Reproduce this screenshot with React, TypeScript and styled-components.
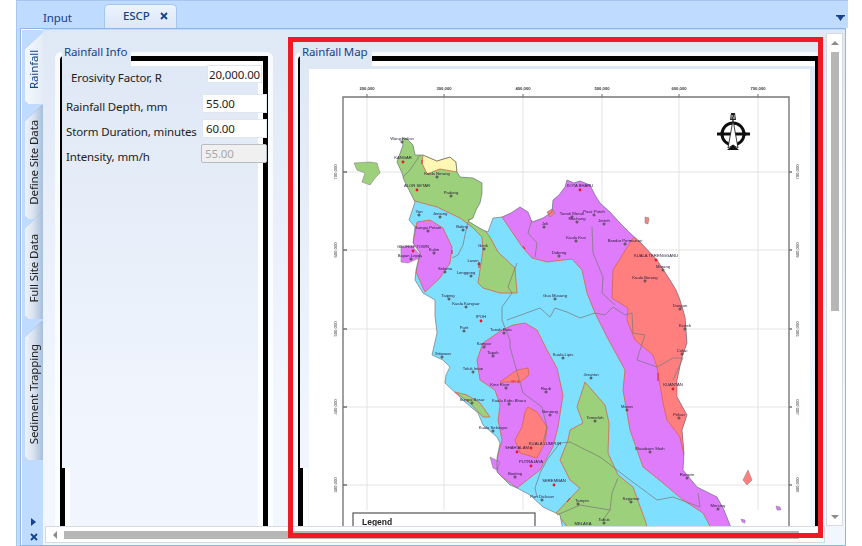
import styled, { createGlobalStyle } from 'styled-components';

const navy = '#15428b';
const paneTop = '#dfe8f5';

const GlobalStyle = createGlobalStyle`
    html, body {
        margin: 0;
        background: #ffffff;
    }
    * {
        box-sizing: border-box;
    }
`;

const Page = styled.div`
    width: 832px;
    height: 546px;
    margin-left: 16px;
    display: flex;
    flex-direction: column;
    font-family: 'Noto Sans', 'Open Sans', sans-serif;
    font-size: 11.5px;
    letter-spacing: -0.13px;
    overflow: hidden;
`;

const TabStrip = styled.div`
    height: 28px;
    flex: none;
    display: flex;
    align-items: flex-end;
    padding-left: 26px;
    background: #bfdbff;
    border-top: 1px solid #a6c6f0;
    border-left: 1px solid #a9c8f0;
`;

const PlainTab = styled.div`
    width: 28px;
    height: 18px;
    line-height: 18px;
    margin-bottom: 1px;
    color: ${navy};
`;

const ActiveTab = styled.div`
    width: 73px;
    height: 24px;
    margin-left: 33px;
    padding: 0 8px 2px 18px;
    display: flex;
    align-items: center;
    justify-content: space-between;
    color: ${navy};
    font-weight: 500;
    background: linear-gradient(#ecf3fd, #dbe7f8);
    border: 1px solid #a6c6f0;
    border-bottom: none;
    border-radius: 5px 5px 0 0;
`;

const StripMenu = styled.svg`
    margin: 0 3px 7px auto;
    display: block;
`;

const Body = styled.div`
    width: 830px;
    flex: 1;
    min-height: 0;
    padding-left: 3px;
    background: #bfdbff;
    border-left: 1px solid #a9c8f0;
`;

const Frame = styled.div`
    height: 100%;
    display: flex;
    background: #bfdbff;
    border: 1px solid #8fb4e6;
`;

const Rail = styled.div`
    width: 22px;
    flex: none;
    display: flex;
    flex-direction: column;
    padding: 4px 0 4px 4px;
    box-shadow: inset 1px 1px 0 #ffffff;
`;

const RailTab = styled.div<{ $height: number; $gap: number }>`
    height: ${({ $height }) => $height}px;
    margin-top: ${({ $gap }) => $gap}px;
    flex: none;
    filter: drop-shadow(0 0 0.6px #7f9abc);
`;

const RailFace = styled.div<{ $active?: boolean; $shift: number }>`
    height: 100%;
    display: flex;
    align-items: center;
    justify-content: center;
    padding-top: ${({ $shift }) => $shift}px;
    clip-path: polygon(0 16px, 17px 0, 100% 0, 100% 100%, 3px 100%, 0 calc(100% - 3px));
    color: ${({ $active }) => ($active ? navy : '#222222')};
    background: ${({ $active }) =>
        $active
            ? 'linear-gradient(90deg, #f4f8fd, #e3ecf8)'
            : 'linear-gradient(90deg, #f0f3f8, #d9e3ef 45%, #a7bfdc)'};
`;

const RailLabel = styled.span`
    writing-mode: vertical-rl;
    transform: rotate(180deg);
    white-space: nowrap;
    line-height: 16px;
`;

const RailFooter = styled.div`
    margin-top: auto;
    display: flex;
    flex-direction: column;
    align-items: center;
    gap: 7px;
`;

const Content = styled.div`
    position: relative;
    flex: 1;
    min-width: 0;
    margin-top: 1px;
    padding: 3px 2px 2px;
    display: grid;
    grid-template-columns: 781px 17px;
    grid-template-rows: 493px 17px;
    background: linear-gradient(${paneTop}, #f2f7ff 75%);
`;

const Viewport = styled.div`
    display: flex;
    gap: 22px;
    padding: 19px 0 0 10px;
    overflow: hidden;
`;

const Group = styled.section<{ $width: number; $side: number }>`
    position: relative;
    flex: none;
    width: ${({ $width }) => $width}px;
    display: flex;
    padding: 4px ${({ $side }) => $side}px 0;
    background: rgba(255, 255, 255, 0.75);
    border-radius: 6px 6px 0 0;
`;

const GroupLegend = styled.h3<{ $left: number; $width: number }>`
    position: absolute;
    top: -8px;
    left: ${({ $left }) => $left}px;
    width: ${({ $width }) => $width}px;
    height: 22px;
    margin: 0;
    padding-left: 2px;
    z-index: 1;
    font-size: inherit;
    font-weight: 400;
    line-height: 16px;
    white-space: nowrap;
    color: ${navy};
    background: ${paneTop};
`;

const GroupFrame = styled.div`
    position: relative;
    flex: 1;
    min-width: 0;
    display: flex;
    border-top: 5px solid #000000;
    border-right: 5px solid #000000;
    border-left: 2px solid #000000;
    border-top-left-radius: 4px;
`;

const ThickEdge = styled.div`
    position: absolute;
    left: -2px;
    bottom: 0;
    width: 10px;
    height: 58px;
    background: #000000;
    border-right: 5px solid #ffffff;
`;

const GroupBody = styled.div<{ $band?: boolean; $padding?: string }>`
    flex: 1;
    min-width: 0;
    padding: ${({ $padding }) => $padding ?? '0'};
    background: linear-gradient(${paneTop}, #f1f6fe 80%);
    border-top: 5px solid #ffffff;
    border-right: ${({ $band }) => ($band ? '5px solid #ffffff' : 'none')};
`;

const Field = styled.div<{ $indent: number; $over: number; $gap: number; $height: number }>`
    height: ${({ $height }) => $height}px;
    display: flex;
    justify-content: space-between;
    margin: ${({ $gap }) => $gap}px -${({ $over }) => $over}px 0 0;
    padding-left: ${({ $indent }) => $indent}px;
`;

const FieldLabel = styled.label`
    padding-top: 5px;
    line-height: 16px;
    color: #222222;
    white-space: nowrap;
`;

const FieldInput = styled.input<{ $width: number; $right?: boolean }>`
    width: ${({ $width }) => $width}px;
    height: 100%;
    padding: 0 ${({ $right }) => ($right ? '1px' : '3px')};
    font: inherit;
    letter-spacing: inherit;
    color: #1e1e1e;
    text-align: ${({ $right }) => ($right ? 'right' : 'left')};
    background: #ffffff;
    border: 1px solid #dfe6f0;
    outline: none;

    &:disabled {
        color: #a9a9a9;
        background: #f0f0f0;
        border: 1px solid #b9bdc2;
        border-radius: 2px;
    }
`;

const MapSvg = styled.svg`
    display: block;
    background: #ffffff;
    font-family: 'Liberation Sans', sans-serif;
    letter-spacing: 0;
`;

const VScroll = styled.div`
    display: flex;
    flex-direction: column;
    align-items: center;
    padding: 7px 0 6px;
    background: #ffffff;
    border: 1px solid #d6dae0;
`;

const HScroll = styled.div`
    margin-right: 1px;
    display: flex;
    align-items: center;
    padding-left: 7px;
    background: #ffffff;
    border: 1px solid #d6dae0;
`;

const ArrowUp = styled.i`
    width: 0;
    height: 0;
    border: 4px solid transparent;
    border-top: none;
    border-bottom: 4px solid #8a8a8a;
`;

const ArrowDown = styled.i`
    width: 0;
    height: 0;
    margin-top: auto;
    border: 4px solid transparent;
    border-bottom: none;
    border-top: 4px solid #8a8a8a;
`;

const ArrowLeft = styled.i`
    width: 0;
    height: 0;
    border: 4px solid transparent;
    border-left: none;
    border-right: 4px solid #8a8a8a;
`;

const VThumb = styled.div`
    width: 8px;
    height: 259px;
    margin-top: 7px;
    background: #b6b6b6;
`;

const HThumb = styled.div`
    width: 735px;
    height: 8px;
    margin-left: 7px;
    background: #b6b6b6;
`;

const Highlight = styled.div`
    position: absolute;
    left: 245px;
    top: 7px;
    width: 535px;
    height: 501px;
    border: 5px solid #ed1c24;
    pointer-events: none;
`;

type Town = { name: string; x: number; y: number; mx: number; my: number; star?: boolean };

const towns: Town[] = [
    { name: 'Wang Kelian', x: 402, y: 140, mx: 402, my: 142 },
    { name: 'KANGAR', x: 403, y: 159, mx: 403, my: 162, star: true },
    { name: 'Kuala Nerang', x: 437, y: 175, mx: 437, my: 177 },
    { name: 'ALOR SETAR', x: 417, y: 187, mx: 417, my: 190, star: true },
    { name: 'Padang', x: 451, y: 194, mx: 451, my: 196 },
    { name: 'Yan', x: 419, y: 213, mx: 419, my: 215 },
    { name: 'Jeniang', x: 440, y: 215, mx: 440, my: 217 },
    { name: 'Baling', x: 462, y: 228, mx: 463, my: 230 },
    { name: 'Sungai Petani', x: 428, y: 229, mx: 428, my: 231 },
    { name: 'GEORGE TOWN', x: 413, y: 248, mx: 413, my: 251, star: true },
    { name: 'Bayan Lepas', x: 410, y: 257, mx: 411, my: 259 },
    { name: 'Kulim', x: 434, y: 251, mx: 434, my: 253 },
    { name: 'Selama', x: 445, y: 270, mx: 445, my: 272 },
    { name: 'Lenggong', x: 466, y: 274, mx: 471, my: 276 },
    { name: 'Lawin', x: 473, y: 262, mx: 479, my: 264 },
    { name: 'Gerik', x: 483, y: 247, mx: 484, my: 249 },
    { name: 'Jeli', x: 545, y: 225, mx: 544, my: 227 },
    { name: 'Dabong', x: 559, y: 254, mx: 559, my: 256 },
    { name: 'KOTA BHARU', x: 580, y: 187, mx: 580, my: 190, star: true },
    { name: 'Tanah Merah', x: 572, y: 215, mx: 572, my: 217 },
    { name: 'Pasir Puteh', x: 594, y: 213, mx: 594, my: 215 },
    { name: 'Machang', x: 577, y: 220, mx: 577, my: 222 },
    { name: 'Jerteh', x: 604, y: 222, mx: 604, my: 224 },
    { name: 'Kuala Krai', x: 576, y: 239, mx: 576, my: 241 },
    { name: 'Bandar Permaisuri', x: 625, y: 242, mx: 625, my: 244 },
    { name: 'KUALA TERENGGANU', x: 656, y: 257, mx: 656, my: 260, star: true },
    { name: 'Marang', x: 663, y: 268, mx: 663, my: 270 },
    { name: 'Kuala Berang', x: 645, y: 279, mx: 645, my: 281 },
    { name: 'Gua Musang', x: 555, y: 297, mx: 555, my: 299 },
    { name: 'Dungun', x: 680, y: 307, mx: 680, my: 309 },
    { name: 'Kerteh', x: 685, y: 327, mx: 685, my: 329 },
    { name: 'Cukai', x: 682, y: 352, mx: 682, my: 354 },
    { name: 'Taiping', x: 448, y: 297, mx: 449, my: 299 },
    { name: 'Kuala Kangsar', x: 466, y: 305, mx: 466, my: 307 },
    { name: 'IPOH', x: 481, y: 318, mx: 481, my: 321, star: true },
    { name: 'Parit', x: 464, y: 329, mx: 464, my: 331 },
    { name: 'Tanah Rata', x: 501, y: 331, mx: 504, my: 333 },
    { name: 'Kampar', x: 484, y: 345, mx: 484, my: 347 },
    { name: 'Tapah', x: 493, y: 354, mx: 493, my: 356 },
    { name: 'Kuala Lipis', x: 563, y: 356, mx: 563, my: 358 },
    { name: 'Sitiawan', x: 443, y: 355, mx: 442, my: 357 },
    { name: 'Teluk Intan', x: 473, y: 370, mx: 473, my: 372 },
    { name: 'Kine River', x: 500, y: 386, mx: 506, my: 388 },
    { name: 'Sungai Besar', x: 472, y: 401, mx: 472, my: 403 },
    { name: 'Kuala Kubu Bharu', x: 509, y: 402, mx: 509, my: 404 },
    { name: 'Raub', x: 546, y: 390, mx: 546, my: 392 },
    { name: 'Bentong', x: 550, y: 413, mx: 550, my: 415 },
    { name: 'Kuala Selangor', x: 493, y: 429, mx: 493, my: 431 },
    { name: 'KUALA LUMPUR', x: 545, y: 445, mx: 531, my: 448, star: true },
    { name: 'SHAH ALAM', x: 517, y: 449, mx: 517, my: 452, star: true },
    { name: 'PUTRAJAYA', x: 531, y: 463, mx: 531, my: 466, star: true },
    { name: 'Banting', x: 515, y: 475, mx: 515, my: 477 },
    { name: 'SEREMBAN', x: 554, y: 482, mx: 554, my: 485, star: true },
    { name: 'Port Dickson', x: 542, y: 498, mx: 542, my: 500 },
    { name: 'Jerantut', x: 591, y: 376, mx: 591, my: 378 },
    { name: 'Maran', x: 627, y: 408, mx: 627, my: 410 },
    { name: 'Temerloh', x: 595, y: 419, mx: 595, my: 421 },
    { name: 'Muadzam Shah', x: 650, y: 450, mx: 650, my: 452 },
    { name: 'KUANTAN', x: 673, y: 386, mx: 673, my: 389, star: true },
    { name: 'Pekan', x: 679, y: 416, mx: 679, my: 418 },
    { name: 'Rompin', x: 687, y: 476, mx: 687, my: 478 },
    { name: 'Mersing', x: 718, y: 507, mx: 718, my: 509 },
    { name: 'Tampin', x: 582, y: 502, mx: 578, my: 504 },
    { name: 'Segamat', x: 631, y: 500, mx: 631, my: 502 },
    { name: 'Tabuk', x: 604, y: 521, mx: 604, my: 523 },
    { name: 'MELAKA', x: 583, y: 525, mx: 570, my: 530 },
];

const coast =
    '402,138 407,139 413,145 415,155 423,155 430,158 437,161 443,159 450,157 456,162 457,172 460,177 473,178 482,183 482,193 480,203 476,210 473,218 468,221 476,226 483,230 488,232 493,218 502,217 511,213 520,207 528,212 532,222 543,218 552,212 553,200 559,195 565,187 567,180 574,183 580,181 590,185 595,195 600,203 610,212 620,223 630,233 640,242 657,260 670,280 676,290 680,300 685,317 687,343 682,357 677,380 677,397 687,415 682,430 684,453 683,470 697,487 717,497 724,510 730,525 735,540 565,540 560,515 543,507 530,495 517,488 510,485 497,472 497,458 500,443 497,437 483,425 478,413 465,402 445,383 446,375 450,367 443,360 432,355 437,333 435,316 435,300 423,293 415,280 416,270 420,253 413,243 415,227 409,220 415,202 404,180 402,173 397,162 403,145';

const regions = [
    {
        fill: '#9dd07a',
        points:
            '390,130 500,130 500,210 468,220 482,227 490,237 498,252 515,268 517,293 500,293 483,288 478,283 480,270 483,250 482,237 472,227 460,218 437,207 415,201 390,195',
    },
    {
        fill: '#fff8b4',
        points: '423,155 437,161 450,157 456,162 457,172 440,169 427,174 422,163',
    },
    {
        fill: '#df7bfb',
        points:
            '502,217 523,248 532,258 547,262 572,259 582,270 587,293 595,313 607,337 625,370 623,390 630,430 643,467 663,483 683,500 703,513 712,530 760,530 760,170 520,170',
    },
    {
        fill: '#ff7f7f',
        points:
            '633,238 613,270 612,298 628,308 627,320 635,340 653,355 657,367 663,403 667,420 680,437 684,455 700,455 700,230',
    },
    {
        fill: '#9dd07a',
        points:
            '585,382 605,405 609,423 608,453 618,475 633,487 645,520 648,530 570,530 556,513 580,488 570,480 560,460 568,440 570,430 583,423 577,407',
    },
    {
        fill: '#df7bfb',
        points:
            '513,325 525,323 537,330 547,350 557,368 563,395 558,427 553,447 540,470 517,488 497,473 497,458 502,440 498,420 500,405 495,390 480,380 477,360 483,343 502,330',
    },
    {
        fill: '#df7bfb',
        points: '417,222 430,220 443,228 452,247 450,263 440,278 425,292 416,272 420,253 413,243',
    },
    {
        fill: '#ff7f7f',
        points: '528,407 537,412 547,427 545,443 537,458 520,453 515,440 522,427 525,412',
    },
    {
        fill: '#ff7f7f',
        points: '500,382 517,370 528,368 529,375 520,382',
    },
    {
        fill: '#9dd07a',
        points: '455,392 467,395 480,403 490,417 483,417 470,403',
    },
];

const islands = [
    { fill: '#9dd07a', points: '354,163 370,162 377,163 380,173 376,177 370,185 362,182 365,173 357,170' },
    { fill: '#df7bfb', points: '401,247 412,246 422,257 408,263 401,262' },
    { fill: '#df7bfb', points: '490,457 500,462 497,470 493,468' },
    { fill: '#ff7f7f', points: '748,470 752,480 747,485 743,480' },
    { fill: '#ff7f7f', points: '645,217 649,218 648,224 645,223' },
    { fill: '#ff7f7f', points: '547,212 552,209 555,213 550,217' },
    { fill: '#df7bfb', points: '776,506 780,507 781,510 777,510' },
    { fill: '#df7bfb', points: '741,519 745,520 745,523 742,522' },
];

const borders = [
    '420,155 410,170 403,177',
    '468,222 465,235 463,245 458,255 452,258',
    '517,263 508,287 512,293 502,307 502,320 505,328 510,340 510,347 523,393 542,407 547,427 543,443',
    '507,320 540,308 550,317 555,308 567,312 580,318 595,313 605,315 613,307 625,315 632,313 633,333 645,335 640,350 637,360 657,367 673,358 683,358 673,380',
    '592,227 593,253 603,277 602,293 615,305',
    '532,220 528,233 537,243 535,257',
    '547,460 560,443 570,442 600,457 617,470 630,480 657,500 673,497 700,507 698,493',
    '618,478 612,493 610,510 603,520',
    '557,515 580,505 610,510',
    '547,460 540,473 535,488 537,497',
];

const gridX = [
    { x: 367, label: '200,000' },
    { x: 444, label: '300,000' },
    { x: 523, label: '400,000' },
    { x: 602, label: '500,000' },
    { x: 679, label: '600,000' },
    { x: 758, label: '700,000' },
];

const gridY = [
    { y: 172, label: '700,000' },
    { y: 250, label: '600,000' },
    { y: 329, label: '500,000' },
    { y: 407, label: '400,000' },
    { y: 485, label: '300,000' },
];

function RainfallMap() {
    return (
        <MapSvg width={501} height={457} viewBox="309 69 501 457">
            <defs>
                <clipPath id="land">
                    <polygon points={coast} />
                </clipPath>
                <filter id="soft" x="0" y="0" width="100%" height="100%">
                    <feGaussianBlur stdDeviation="0.4" />
                </filter>
            </defs>
            <g filter="url(#soft)">
                {gridX.map(({ x }) => (
                    <line key={x} x1={x} y1={97} x2={x} y2={510} stroke="#dcdcdc" strokeWidth={0.8} />
                ))}
                {gridY.map(({ y }) => (
                    <line key={y} x1={343} y1={y} x2={789} y2={y} stroke="#dcdcdc" strokeWidth={0.8} />
                ))}

                <polygon points={coast} fill="#7fdfff" />
                <g clipPath="url(#land)">
                    {regions.map(({ fill, points }) => (
                        <polygon key={points} points={points} fill={fill} stroke="#d4664a" strokeWidth={0.8} />
                    ))}
                </g>
                {islands.map(({ fill, points }) => (
                    <polygon key={points} points={points} fill={fill} stroke="#777777" strokeWidth={0.5} />
                ))}
                <polygon points={coast} fill="none" stroke="#666666" strokeWidth={0.6} />
                {borders.map((points) => (
                    <polyline key={points} points={points} fill="none" stroke="#777777" strokeWidth={0.7} />
                ))}

                {gridX.map(({ x }) => (
                    <line key={x} x1={x} y1={94} x2={x} y2={97} stroke="#444444" strokeWidth={0.8} />
                ))}
                {gridY.map(({ y }) => (
                    <g key={y}>
                        <line x1={343} y1={y} x2={347} y2={y} stroke="#333333" strokeWidth={1} />
                        <line x1={789} y1={y} x2={792} y2={y} stroke="#333333" strokeWidth={1} />
                    </g>
                ))}
                <polyline points="343,526 343,97 789,97 789,526" fill="none" stroke="#777777" strokeWidth={1.4} />

                {gridX.map(({ x, label }) => (
                    <text key={x} x={x} y={90} fontSize={4.2} fontWeight={700} textAnchor="middle" fill="#333333">
                        {label}
                    </text>
                ))}
                {gridY.map(({ y, label }) => (
                    <g key={y}>
                        <text transform={`translate(337 ${y}) rotate(-90)`} fontSize={4.2} textAnchor="middle" fill="#333333">
                            {label}
                        </text>
                        <text transform={`translate(799 ${y}) rotate(-90)`} fontSize={4.2} textAnchor="middle" fill="#333333">
                            {label}
                        </text>
                    </g>
                ))}

                {towns.map(({ name, x, y, mx, my, star }) => (
                    <g key={name}>
                        <text x={x} y={y} fontSize={4.2} textAnchor="middle" fill="#2a1a3a">
                            {name}
                        </text>
                        {star ? (
                            <circle cx={mx} cy={my} r={1.4} fill="#e8182a" />
                        ) : (
                            <circle cx={mx} cy={my} r={1} fill="#ffffff" stroke="#111111" strokeWidth={0.8} />
                        )}
                    </g>
                ))}
                <text x={515} y={383} fontSize={4.2} textAnchor="middle" fill="#e8182a">
                    TF 5
                </text>
                <path
                    d="M422 160v4M452 250v4M479 262v6M523 246l2 3M658 373v8M570 498l-3 4"
                    stroke="#e8182a"
                    strokeWidth={1}
                    fill="none"
                />

                <circle cx={733} cy={134} r={11} fill="#ffffff" stroke="#111111" strokeWidth={3} />
                <path d="M717 134h33" stroke="#111111" strokeWidth={3} />
                <path d="M717 134l6-2v4zM750 134l-6-2v4z" fill="#111111" />
                <path d="M733 120l-5 28 5-3 5 3z" fill="#ffffff" stroke="#111111" strokeWidth={0.8} />
                <path d="M727 150l6-5 6 5-6 0z" fill="#111111" />
                <path d="M731 113h4l1 7h-6z" fill="#222222" />
                <text x={733} y={119} fontSize={5} textAnchor="middle" fill="#ffffff">
                    N
                </text>

                <rect x={353} y={513} width={182} height={20} fill="#ffffff" stroke="#555555" strokeWidth={1.2} />
                <text x={362} y={525} fontSize={8.5} fontWeight={700} fill="#222222">
                    Legend
                </text>
            </g>
        </MapSvg>
    );
}

export default function App() {
    return (
        <Page>
            <GlobalStyle />
            <TabStrip>
                <PlainTab>Input</PlainTab>
                <ActiveTab>
                    ESCP
                    <svg width="8" height="8" viewBox="0 0 8 8">
                        <path d="M1 1l6 6M7 1l-6 6" stroke={navy} strokeWidth="1.8" />
                    </svg>
                </ActiveTab>
                <StripMenu width="9" height="6" viewBox="0 0 9 6">
                    <path d="M0 0h9v1.4H7.6L4.5 6 1.4 1.4H0z" fill={navy} />
                </StripMenu>
            </TabStrip>
            <Body>
                <Frame>
                    <Rail>
                        <RailTab $height={71} $gap={0}>
                            <RailFace $active $shift={2}>
                                <RailLabel>Rainfall</RailLabel>
                            </RailFace>
                        </RailTab>
                        <RailTab $height={114} $gap={1}>
                            <RailFace $shift={0}>
                                <RailLabel>Define Site Data</RailLabel>
                            </RailFace>
                        </RailTab>
                        <RailTab $height={107} $gap={-7}>
                            <RailFace $shift={6}>
                                <RailLabel>Full Site Data</RailLabel>
                            </RailFace>
                        </RailTab>
                        <RailTab $height={139} $gap={2}>
                            <RailFace $shift={7}>
                                <RailLabel>Sediment Trapping</RailLabel>
                            </RailFace>
                        </RailTab>
                        <RailFooter>
                            <svg width="6" height="8" viewBox="0 0 6 8">
                                <path d="M0 0l5 4-5 4z" fill={navy} />
                            </svg>
                            <svg width="8" height="8" viewBox="0 0 8 8">
                                <path d="M1 1l6 6M7 1l-6 6" stroke={navy} strokeWidth="1.8" />
                            </svg>
                        </RailFooter>
                    </Rail>
                    <Content>
                        <Viewport>
                            <Group $width={218} $side={5}>
                                <GroupLegend $left={7} $width={69}>
                                    Rainfall Info
                                </GroupLegend>
                                <GroupFrame>
                                    <ThickEdge />
                                    <GroupBody $band>
                                        <Field $indent={9} $over={4} $gap={-1} $height={18}>
                                            <FieldLabel>Erosivity Factor, R</FieldLabel>
                                            <FieldInput $width={55} $right readOnly value="20,000.00" />
                                        </Field>
                                        <Field $indent={4} $over={9} $gap={11} $height={19}>
                                            <FieldLabel>Rainfall Depth, mm</FieldLabel>
                                            <FieldInput $width={65} readOnly value="55.00" />
                                        </Field>
                                        <Field $indent={4} $over={9} $gap={6} $height={19}>
                                            <FieldLabel>Storm Duration, minutes</FieldLabel>
                                            <FieldInput $width={65} readOnly value="60.00" />
                                        </Field>
                                        <Field $indent={4} $over={9} $gap={6} $height={19}>
                                            <FieldLabel>Intensity, mm/h</FieldLabel>
                                            <FieldInput $width={66} disabled value="55.00" />
                                        </Field>
                                    </GroupBody>
                                </GroupFrame>
                            </Group>
                            <Group $width={528} $side={3}>
                                <GroupLegend $left={5} $width={72}>
                                    Rainfall Map
                                </GroupLegend>
                                <GroupFrame>
                                    <ThickEdge />
                                    <GroupBody $padding="3px 5px 0 9px">
                                        <RainfallMap />
                                    </GroupBody>
                                </GroupFrame>
                            </Group>
                        </Viewport>
                        <VScroll>
                            <ArrowUp />
                            <VThumb />
                            <ArrowDown />
                        </VScroll>
                        <HScroll>
                            <ArrowLeft />
                            <HThumb />
                        </HScroll>
                        <Highlight />
                    </Content>
                </Frame>
            </Body>
        </Page>
    );
}
